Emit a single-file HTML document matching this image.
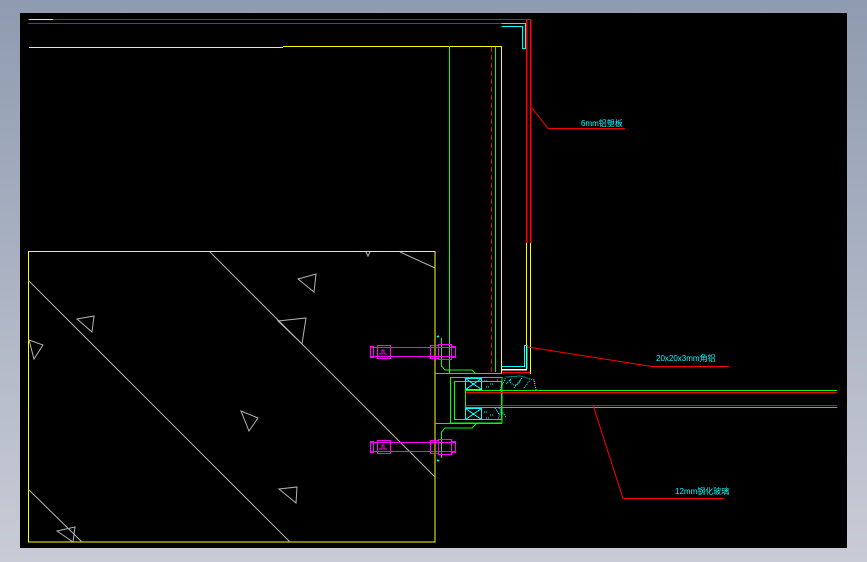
<!DOCTYPE html>
<html><head><meta charset="utf-8"><style>
html,body{margin:0;padding:0;width:867px;height:562px;overflow:hidden;background:linear-gradient(#8e9bb0,#c9ccd6);}
svg{position:absolute;left:0;top:0}
text{font-family:"Liberation Sans","Noto Sans CJK SC",sans-serif;font-size:8px;fill:#00ffff}
</style></head><body>
<svg width="867" height="562" viewBox="0 0 867 562" shape-rendering="crispEdges">
<rect x="20" y="13" width="827" height="535" fill="#000"/>
<g fill="none" stroke-width="1">
<line x1="28" y1="19.5" x2="530" y2="19.5" stroke="#ff0000"/>
<line x1="29" y1="19.5" x2="53" y2="19.5" stroke="#ffff00"/>
<line x1="28" y1="23.5" x2="527" y2="23.5" stroke="#ff0000"/>
<line x1="29" y1="47.5" x2="283" y2="47.5" stroke="#ffff00"/>
<line x1="283" y1="46.5" x2="502" y2="46.5" stroke="#ffff00"/>
<line x1="449.5" y1="46" x2="449.5" y2="373" stroke="#00ff00"/>
<line x1="491.5" y1="47" x2="491.5" y2="372" stroke="#ff0000" stroke-dasharray="5,3"/>
<line x1="495.5" y1="47" x2="495.5" y2="372" stroke="#00ff00"/>
<line x1="501.5" y1="46" x2="501.5" y2="373" stroke="#ffff00"/>
<line x1="526.5" y1="19" x2="526.5" y2="243" stroke="#ff0000" stroke-width="1.5"/>
<line x1="530.5" y1="19" x2="530.5" y2="243" stroke="#ff0000" stroke-width="1.5"/>
<line x1="526.5" y1="243" x2="526.5" y2="370" stroke="#ffff00"/>
<line x1="530.5" y1="243" x2="530.5" y2="374" stroke="#ffff00"/>
<path d="M501.5 23.5 H525.5 V48.5 H522.5 V26.5 H501.5" stroke="#00ffff"/>
<path d="M502 366.5 H524.5 V345.5 H527 V369" stroke="#00ffff"/>
<line x1="502" y1="369.5" x2="527" y2="369.5" stroke="#ffffff" stroke-width="1.5"/>
<line x1="502" y1="372.5" x2="530" y2="372.5" stroke="#ff0000"/>
<rect x="28.5" y="251.5" width="406.5" height="290.5" stroke="#ffff00"/>
<line x1="435" y1="251" x2="435" y2="542" stroke="#ffff00"/>
<g stroke="#b4b4b4" shape-rendering="auto">
<line x1="28" y1="280" x2="290" y2="542"/>
<line x1="210" y1="252" x2="435" y2="477"/>
<line x1="28" y1="489" x2="82" y2="542"/>
<line x1="400" y1="252" x2="435" y2="268"/>
<polygon points="298,279 316,274 314,292"/>
<polygon points="77,319 94,316 92,332"/>
<polygon points="278,321 306,318 302,344"/>
<polygon points="29,340 43,345 34,359"/>
<polygon points="241,411 258,418 249,431"/>
<polygon points="279,489 297,487 296,503"/>
<polygon points="57,531 75,527 73,542"/>
<polyline points="366,252 368,256 370,252"/>
</g>
<line x1="435" y1="373.5" x2="502" y2="373.5" stroke="#00ff00"/>
<rect x="450.5" y="377.5" width="51.5" height="45.5" stroke="#00ff00"/>
<rect x="454.5" y="381.5" width="47" height="38" stroke="#00ff00"/>
<line x1="435" y1="423.5" x2="502" y2="423.5" stroke="#00ff00"/>
<line x1="465" y1="390.5" x2="837" y2="390.5" stroke="#00ff00"/>
<line x1="465" y1="392.5" x2="837" y2="392.5" stroke="#ff0000"/>
<line x1="465" y1="405.5" x2="837" y2="405.5" stroke="#ff0000"/>
<line x1="465" y1="407.5" x2="837" y2="407.5" stroke="#00ff00"/>
<line x1="465.5" y1="390" x2="465.5" y2="408" stroke="#00ff00"/>
<g stroke="#00ffff">
<rect x="465.5" y="378.5" width="16" height="11"/><path d="M465.5 378.5 L481.5 389.5 M481.5 378.5 L465.5 389.5"/>
<rect x="465.5" y="408.5" width="16" height="11"/><path d="M465.5 408.5 L481.5 419.5 M481.5 408.5 L465.5 419.5"/>
<path d="M484 381 h3 M490 384 h3 M486 387 h4 M497 380 h2 M484 412 h3 M490 415 h3 M486 418 h4" stroke-dasharray="1,1"/>
<path d="M500 390 L506 377 L520 376 L534 380 L536 390 M506 384 L512 378 M514 388 L522 378 M524 388 L530 380 M510 380 a5 5 0 1 0 10 0" stroke-dasharray="1,1"/>
<path d="M499 408 L506 417 M502 408 L498 419 M495 408 l4 6" stroke-dasharray="1,1"/>
</g>
<path d="M441.5 338 V366 L445 370 H472 L476 374" stroke="#00ff00"/>
<path d="M441.5 458 V432 L445 428 H472 L476 424" stroke="#00ff00"/>
<path d="M437 337 l2 -1 M437 460 l2 1" stroke="#00ffff" stroke-width="2"/>
<g stroke="#ff00ff">
<rect x="370.5" y="347.5" width="85" height="9"/>
<rect x="370.5" y="346.5" width="3" height="11"/>
<rect x="377.5" y="345.5" width="13" height="13"/>
<path d="M379 354 h3 v-4 h2 v4 h3"/>
<rect x="430.5" y="345.5" width="8" height="13"/>
<rect x="438.5" y="344.5" width="13" height="15"/>
<rect x="451.5" y="346.5" width="4" height="11"/>
<rect x="370.5" y="442.5" width="85" height="9"/>
<rect x="370.5" y="441.5" width="3" height="11"/>
<rect x="377.5" y="440.5" width="13" height="13"/>
<path d="M379 449 h3 v-4 h2 v4 h3"/>
<rect x="430.5" y="440.5" width="8" height="13"/>
<rect x="438.5" y="439.5" width="13" height="15"/>
<rect x="451.5" y="441.5" width="4" height="11"/>
</g>
<g stroke="#ff0000" shape-rendering="auto">
<polyline points="532,108 548,128.5 625,128.5"/>
<polyline points="528,347 652,366.5 729,366.5"/>
<polyline points="593,405 623,498.5 724,498.5"/>
</g>
</g>
<text x="581" y="126">6mm铝塑板</text>
<text x="656" y="361">20x20x3mm角铝</text>
<text x="675" y="494">12mm钢化玻璃</text>
</svg>
</body></html>
